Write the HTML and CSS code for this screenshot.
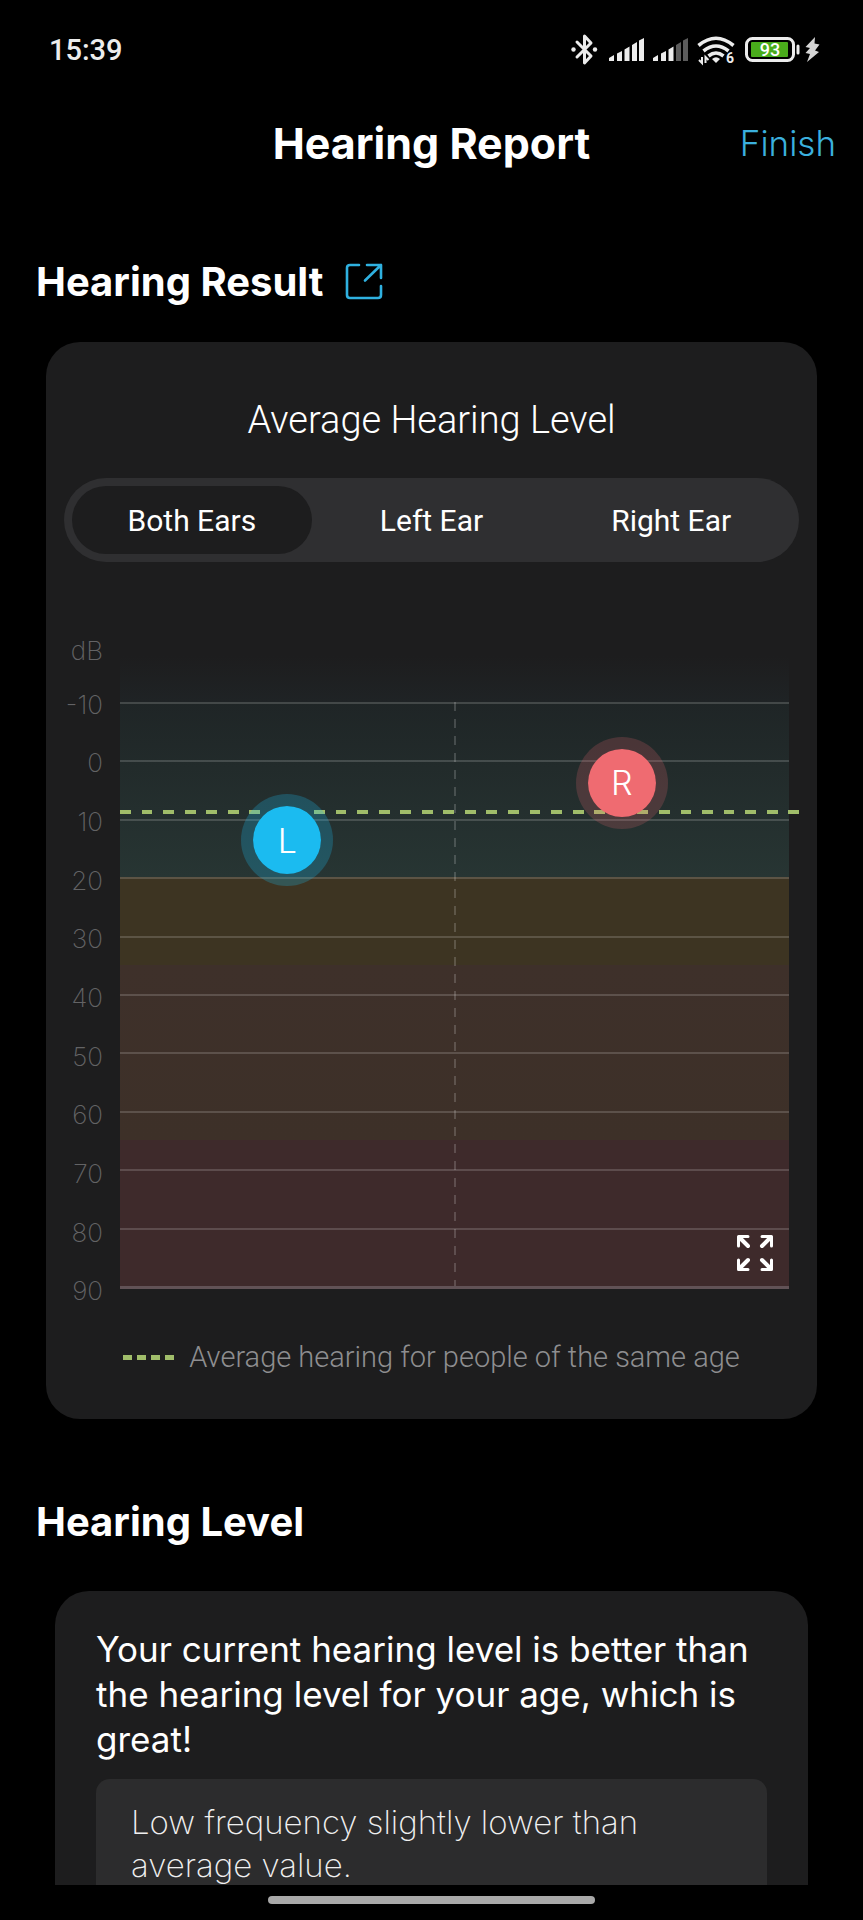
FILE: index.html
```html
<!DOCTYPE html>
<html lang="en">
<head>
<meta charset="utf-8">
<meta name="viewport" content="width=device-width, initial-scale=1">
<title>Hearing Report</title>
<link rel="stylesheet" href="styles.css">
</head>
<body>
<div class="screen">
  <div class="status">
    <time class="status-time">15:39</time>
    <svg class="status-icons" width="250" height="32" viewBox="0 0 250 32" role="img" aria-label="Bluetooth, signal, Wi-Fi, battery 93 percent, charging">
      <g fill="none" stroke="#ececec" stroke-width="3" stroke-linejoin="round" stroke-linecap="round">
        <path d="M7 8 21 22 14.500 29V2L21 9 7 23"/>
      </g>
      <g fill="#ececec">
        <circle cx="3.500" cy="15.500" r="2.200"/><circle cx="25" cy="15.500" r="2.200"/>
        <path d="M39 24 44 21V27H39zM47 19.500 52 17V27H47zM54.500 15.500 59.500 12.500V27H54.500zM62 11 67 8V27H62zM69 6.500 74 4V27H69z"/>
        <path d="M83 24 88 21V27H83zM91 19.500 96 17V27H91zM98.500 15.500 103.500 12.500V27H98.500z"/>
      </g>
      <path fill="#5c5c5c" d="M106 11 111 8V27H106zM113 6.500 118 4V27H113z"/>
      <g fill="none" stroke="#ececec" stroke-width="3.600">
        <path d="M128.500 11.500Q146-3 163.500 11.500M133.500 17Q146 7 158.500 17M138.500 22Q146 16 153.500 22"/>
      </g>
      <path fill="#ececec" d="M142 25Q146 21.500 150 25L146 29z"/>
      <path fill="none" stroke="#ececec" stroke-width="2" d="M132 23V29L129 26M135.500 29V23L138.500 26"/>
      <text x="156" y="29" class="wifi-gen">6</text>
      <rect x="176.500" y="4.500" width="47" height="22" rx="6" fill="none" stroke="#ececec" stroke-width="3"/>
      <rect x="181" y="8" width="37" height="15" rx="1" fill="#49ac1b"/>
      <text x="200" y="22" text-anchor="middle" class="charge">93</text>
      <path d="M228 12v7" stroke="#ececec" stroke-width="3" stroke-linecap="round"/>
      <path fill="#d5d5d5" d="M245 3 235.500 13 240 14 235.500 19 240 20 237 28 249 18 245 16.500 249.500 10.500 244.500 9.500z"/>
    </svg>
  </div>

  <header class="topbar">
    <h1 class="topbar-title">Hearing Report</h1>
    <button class="finish" type="button">Finish</button>
  </header>

  <main class="content">
    <div class="section-head">
      <h2 class="section-title">Hearing Result</h2>
      <button class="icon-button" type="button" aria-label="Share result">
        <svg width="38" height="38" viewBox="0 0 38 38" fill="none" stroke="#2fb1e0" stroke-width="2.600" stroke-linecap="round" stroke-linejoin="round">
          <path d="M14 2H5Q2 2 2 5V32Q2 35 5 35H33Q36 35 36 32V23M22 2H36V15M36 2 20 17.500"/>
        </svg>
      </button>
    </div>

    <section class="card">
      <h3 class="card-title">Average Hearing Level</h3>
      <div class="tabs" role="tablist">
        <button class="tab tab-active" type="button" role="tab" aria-selected="true">Both Ears</button>
        <button class="tab" type="button" role="tab" aria-selected="false">Left Ear</button>
        <button class="tab" type="button" role="tab" aria-selected="false">Right Ear</button>
      </div>

      <div class="chart">
        <div class="axis">
          <span class="unit">dB</span>
          <span class="tick">-10</span><span class="tick">0</span><span class="tick">10</span><span class="tick">20</span><span class="tick">30</span><span class="tick">40</span><span class="tick">50</span><span class="tick">60</span><span class="tick">70</span><span class="tick">80</span><span class="tick">90</span>
        </div>
        <div class="plot">
          <div class="fade"></div>
          <div class="scale">
            <div class="row"></div><div class="row"></div><div class="row"></div><div class="row"></div><div class="row"></div><div class="row"></div><div class="row"></div><div class="row"></div><div class="row"></div><div class="row"></div>
            <div class="divider"></div>
            <div class="average"></div>
            <div class="point point-left">L</div>
            <div class="point point-right">R</div>
            <button class="expand" type="button" aria-label="Full screen">
              <svg width="38" height="38" viewBox="0 0 38 38" stroke="#fff" stroke-linecap="round" stroke-linejoin="round">
                <path fill="none" stroke-width="4" d="M4 4 12 12M34 4 26 12M4 34 12 26M34 34 26 26"/>
                <path fill="none" stroke-width="3" d="M2.500 12V2.500H12M35.500 12V2.500H26M2.500 26V35.500H12M35.500 26V35.500H26"/>
              </svg>
            </button>
          </div>
        </div>
      </div>

      <div class="legend"><span class="legend-line"></span>Average hearing for people of the same age</div>
    </section>

    <h2 class="section-title level-title">Hearing Level</h2>
    <section class="level-card">
      <p class="level-text">Your current hearing level is better than the hearing level for your age, which is great!</p>
      <p class="note">Low frequency slightly lower than average value.</p>
    </section>
  </main>
  <div class="home"><div class="home-bar"></div></div>
</div>
</body>
</html>
```
FILE: styles.css
```css
* { box-sizing: border-box; }
body {
  margin: 0;
  background: #000;
  color: #fff;
  font-family: Inter, "Liberation Sans", sans-serif;
}
h1, h2, h3, p { margin: 0; }
button {
  margin: 0;
  padding: 0;
  border: 0;
  background: none;
  color: inherit;
  font: inherit;
}
svg { display: block; }

.screen {
  display: flex;
  flex-direction: column;
  height: 100vh;
  overflow: hidden;
}
.status {
  display: flex;
  flex: none;
  justify-content: space-between;
  align-items: center;
  height: 100px;
  padding: 0 43px 0 49px;
}
.status-time {
  font: 500 29px/36px Roboto, sans-serif;
  color: #ececec;
}
.wifi-gen { font: 700 14px Roboto, sans-serif; fill: #ececec; }
.charge { font: 500 18px Roboto, sans-serif; fill: #fff; }

.topbar {
  display: grid;
  flex: none;
  grid-template-columns: 1fr auto 1fr;
  align-items: center;
  height: 86px;
  padding: 0 27px;
}
.topbar-title {
  grid-column: 2;
  font-size: 43px;
  line-height: 52px;
  font-weight: 700;
}
.finish {
  justify-self: end;
  color: #3bb0de;
  font-size: 35px;
  line-height: 44px;
  font-weight: 300;
}

.content {
  flex: 1;
  min-height: 0;
  overflow: hidden;
}
.section-head {
  display: flex;
  align-items: center;
  gap: 22px;
  margin-top: 74px;
  padding-left: 36px;
}
.section-title {
  font-size: 40px;
  line-height: 44px;
  font-weight: 700;
}
.card {
  margin: 38px 46px 0;
  padding: 52px 18px 40px;
  border-radius: 34px;
  background: #1d1d1e;
}
.card-title {
  font: 300 38px/52px Roboto, sans-serif;
  text-align: center;
}
.tabs {
  display: grid;
  grid-template-columns: repeat(3, 1fr);
  margin-top: 32px;
  padding: 8px;
  border-radius: 42px;
  background: #2f2f31;
}
.tab {
  height: 68px;
  padding-top: 2px;
  border-radius: 34px;
  font: 400 30px/40px Roboto, sans-serif;
}
.tab-active { background: #1d1d1e; }

.chart {
  display: grid;
  grid-template-columns: 40px 1fr;
  column-gap: 16px;
  height: 693px;
  margin-top: 65px;
  padding-right: 10px;
}
.axis {
  display: flex;
  flex-direction: column;
  padding-right: 1px;
  color: #636365;
  font-size: 26px;
  font-weight: 200;
  text-align: right;
}
.unit {
  height: 48px;
  line-height: 48px;
}
.tick {
  display: flex;
  flex: 1;
  align-items: center;
  justify-content: flex-end;
}
.plot {
  display: flex;
  flex-direction: column;
  padding: 29px 0 31px;
}
.fade {
  height: 46px;
  background: linear-gradient(#1d1d1e, #1f2325);
}
.scale {
  position: relative;
  display: grid;
  flex: 1;
  grid-template-rows: repeat(10, 1fr);
  border-bottom: 3px solid #615256;
  background:
    linear-gradient(#1f2526, #273533) top / 100% 30% no-repeat,
    linear-gradient(#3d3422 45%, #3e302a 45%, #3d3028 75%, #3e2a2b 75%);
}
.row { border-top: 2px solid rgba(255, 255, 255, 0.16); }
.divider {
  position: absolute;
  top: 0;
  bottom: 0;
  left: 50%;
  width: 2px;
  transform: translateX(-50%);
  background: repeating-linear-gradient(rgba(255, 255, 255, 0.17) 0 9px, transparent 9px 17px);
}
.average {
  position: absolute;
  top: 18.5%;
  left: 0;
  right: -10px;
  height: 4px;
  background: repeating-linear-gradient(90deg, #a0bd6a 0 1.6%, transparent 1.6% 3.175%);
}
.point {
  position: absolute;
  display: grid;
  place-items: center;
  width: 92px;
  height: 92px;
  border: 12px solid;
  border-radius: 50%;
  background-clip: padding-box;
  transform: translate(-50%, -50%);
  font-size: 34px;
  font-weight: 300;
}
.point-left {
  top: 23.700%;
  left: 25%;
  border-color: rgba(27, 187, 240, 0.25);
  background-color: #1bbbf0;
}
.point-right {
  top: 13.800%;
  left: 75%;
  border-color: rgba(239, 107, 113, 0.2);
  background-color: #ef6b71;
}
.expand {
  position: absolute;
  right: 15px;
  bottom: 14px;
}
.legend {
  display: flex;
  align-items: center;
  justify-content: center;
  gap: 14px;
  margin-top: 17px;
  margin-bottom: 2px;
  color: #8e8e90;
  font: 300 29px/40px Roboto, sans-serif;
}
.legend-line {
  width: 52px;
  height: 5px;
  background: repeating-linear-gradient(90deg, #a0bd6a 0 9px, transparent 9px 14px);
}
.level-title {
  margin-top: 81px;
  padding-left: 36px;
}
.level-card {
  margin: 47px 55px 0;
  padding: 36px 41px;
  border-radius: 34px;
  background: #1d1d1e;
}
.level-text {
  font-size: 35px;
  line-height: 45px;
}
.note {
  margin-top: 17px;
  padding: 22px 35px;
  border-radius: 14px;
  background: #2c2c2d;
  color: #f0f0f0;
  font-size: 33px;
  line-height: 43px;
  font-weight: 200;
}
.home {
  display: flex;
  flex: none;
  justify-content: center;
  height: 35px;
  padding-top: 11px;
}
.home-bar {
  width: 38%;
  height: 8px;
  border-radius: 4px;
  background: #a8a8a8;
}
```
